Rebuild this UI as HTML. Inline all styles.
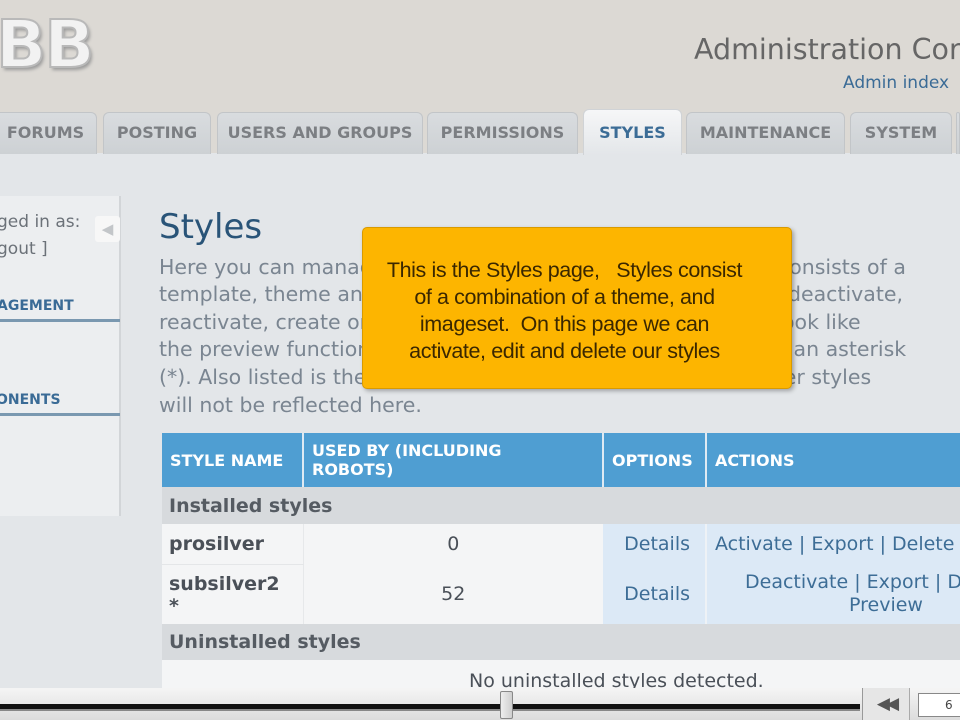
<!DOCTYPE html>
<html><head><meta charset="utf-8">
<style>
*{margin:0;padding:0;box-sizing:border-box}
body{width:960px;height:720px;overflow:hidden;position:relative;background:#e3e6e9;font-family:"DejaVu Sans","Liberation Sans",sans-serif}
.abs{position:absolute}
#hdr{left:0;top:0;width:960px;height:153px;background:#dcd9d4}
.logo{left:-4px;top:6px;font:bold 66px "DejaVu Sans",sans-serif;color:#f2f2f2;-webkit-text-stroke:2px #b9b9b9;text-shadow:2px 3px 3px #9a9a9a;letter-spacing:-2px}
.title{left:694px;top:33px;font-size:28.5px;color:#666;white-space:nowrap;width:266px;overflow:hidden}
.aidx{left:843px;top:73px;font-size:17px;color:#3a6b96;white-space:nowrap}
.tab{top:112px;height:42px;background:linear-gradient(#d9dcdf,#cdd1d4);border:1px solid #c2c5c8;border-bottom:none;border-radius:6px 6px 0 0;font-weight:bold;font-size:16px;color:#7c7f83;text-align:center;line-height:40px;white-space:nowrap;overflow:hidden}
.tab.act{background:linear-gradient(#f6f7f8,#e3e6e9);color:#3b6c96;top:109px;height:46px;line-height:46px;border-color:#d0d3d6}
#side{left:0;top:196px;width:121px;height:320px;background:#eceef0;border-right:2px solid #d2d5d8}
.st{font-size:17px;color:#6b7178;white-space:nowrap}
.sh{font-size:14px;font-weight:bold;color:#3a6b96;white-space:nowrap}
.sl{left:0;width:120px;height:3px;background:#7a98b0}
h1{position:absolute;left:159px;top:207px;font-size:34px;font-weight:normal;color:#295478}
#txt{left:0;top:0;width:960px;height:720px;overflow:hidden}
.p{left:159px;font-size:20.5px;color:#7a8591;white-space:nowrap}
#call{left:362px;top:227px;width:430px;height:162px;background:#fdb500;border:1px solid #d99a00;border-radius:5px;box-shadow:2px 2px 4px rgba(0,0,0,.3);font-family:"Liberation Sans",sans-serif;font-size:21.5px;letter-spacing:-0.4px;color:#3a2700;text-align:center;line-height:27px;padding-top:29px;padding-right:25px}
#tw{left:0;top:0;width:960px;height:688px;overflow:hidden}
table{position:absolute;left:162px;top:433px;border-collapse:collapse;font-size:19px;width:860px;table-layout:fixed}
th{background:#4f9ed2;color:#fff;font-size:16px;text-align:left;padding:0 8px;border-right:2px solid #dfeaf3;height:54px;line-height:19px;white-space:nowrap}
td{height:38px;color:#4a5058}
.cat td{background:#d7dadd;font-weight:bold;color:#555b62;padding-left:7px}
.r td{background:#f4f5f6}
.r td.b{background:#dce9f6;color:#3d6d96}
#bar{left:0;top:688px;width:960px;height:32px;background:linear-gradient(#f5f5f5,#dcdcdc)}
</style></head><body>
<div id="hdr" class="abs"></div>
<div class="abs logo">BB</div>
<div class="abs title">Administration Con</div>
<div class="abs aidx">Admin index</div>
<div class="abs tab" style="left:-6px;width:103px">FORUMS</div>
<div class="abs tab" style="left:103px;width:108px">POSTING</div>
<div class="abs tab" style="left:217px;width:206px">USERS AND GROUPS</div>
<div class="abs tab" style="left:427px;width:151px">PERMISSIONS</div>
<div class="abs tab act" style="left:583px;width:99px">STYLES</div>
<div class="abs tab" style="left:686px;width:159px">MAINTENANCE</div>
<div class="abs tab" style="left:850px;width:102px">SYSTEM</div>
<div class="abs tab" style="left:956px;width:4px"></div>
<div id="side" class="abs"></div>
<div class="abs st" style="left:-3px;top:212px">ged in as:</div>
<div class="abs" style="left:95px;top:216px;width:25px;height:26px;background:#f7f7f7;border-radius:3px;color:#c3c6c9;font-size:15px;text-align:center;line-height:26px">◀</div>
<div class="abs st" style="left:-3px;top:239px">gout ]</div>
<div class="abs sh" style="left:-3px;top:298px">AGEMENT</div>
<div class="abs sl" style="top:319px"></div>
<div class="abs sh" style="left:-4px;top:392px">ONENTS</div>
<div class="abs sl" style="top:413px"></div>
<h1>Styles</h1>
<div id="txt" class="abs">
<div class="abs p" style="top:255px">Here you can manage the available styles on board. A style consists of a</div>
<div class="abs p" style="top:282px">template, theme and imageset. You may alter styles, delete, deactivate,</div>
<div class="abs p" style="top:310px">reactivate, create or import new ones. See what a style will look like</div>
<div class="abs p" style="top:337px">the preview function. The default is noted by the presence of an asterisk</div>
<div class="abs p" style="top:365px">(*). Also listed is the total user count, note that overriding user styles</div>
<div class="abs p" style="top:393px">will not be reflected here.</div>
</div>
<div id="call" class="abs">This is the Styles page,&nbsp;&nbsp; Styles consist<br>of a combination of a theme, and<br>imageset.&nbsp; On this page we can<br>activate, edit and delete our styles</div>
<div id="tw" class="abs">
<table>
<colgroup><col style="width:141px"><col style="width:300px"><col style="width:103px"><col></colgroup>
<tr><th>STYLE NAME</th><th>USED BY (INCLUDING<br>ROBOTS)</th><th>OPTIONS</th><th>ACTIONS</th></tr>
<tr class="cat"><td colspan="4" style="height:37px">Installed styles</td></tr>
<tr class="r"><td style="font-weight:bold;padding-left:7px;height:40px;border-bottom:1px solid #e4e6e8">prosilver</td><td style="text-align:center;border-left:1px solid #e6e8ea">0</td><td class="b" style="text-align:right;padding-right:15px;border-right:2px solid #eef2f6">Details</td><td class="b" style="padding-left:8px;white-space:nowrap">Activate | Export | Delete</td></tr>
<tr class="r"><td style="font-weight:bold;padding-left:7px;height:60px;line-height:22px;vertical-align:top;padding-top:8px">subsilver2<br>*</td><td style="text-align:center;border-left:1px solid #e6e8ea">52</td><td class="b" style="text-align:right;padding-right:15px;border-right:2px solid #eef2f6">Details</td><td class="b" style="white-space:nowrap;line-height:23px;vertical-align:top;padding-top:7px;padding-left:38px">Deactivate | Export | Delete<br><span style="padding-left:104px">Preview</span></td></tr>
<tr class="cat"><td colspan="4" style="height:36px">Uninstalled styles</td></tr>
<tr class="r"><td colspan="4" style="height:36px;padding-left:307px;padding-top:6px;background:#f4f5f6;white-space:nowrap">No uninstalled styles detected.</td></tr>
</table>
</div>
<div id="bar" class="abs"></div>
<div class="abs" style="left:0;top:704px;width:860px;height:5px;background:#111"></div>
<div class="abs" style="left:0;top:709px;width:860px;height:2px;background:#888"></div>
<div class="abs" style="left:500px;top:691px;width:13px;height:28px;background:linear-gradient(90deg,#eee,#cfcfcf);border:1px solid #888;border-radius:2px"></div>
<div class="abs" style="left:862px;top:688px;width:48px;height:32px;background:#e6e6e6;border-left:1px solid #999;border-right:1px solid #aaa;color:#555;font-size:17px;text-align:center;line-height:32px;letter-spacing:-4px">◀◀</div>
<div class="abs" style="left:918px;top:693px;width:42px;height:24px;background:#fff;border:1px solid #888;border-right:none;font-size:12px;color:#444;padding-left:26px;line-height:22px">6</div>
</body></html>
